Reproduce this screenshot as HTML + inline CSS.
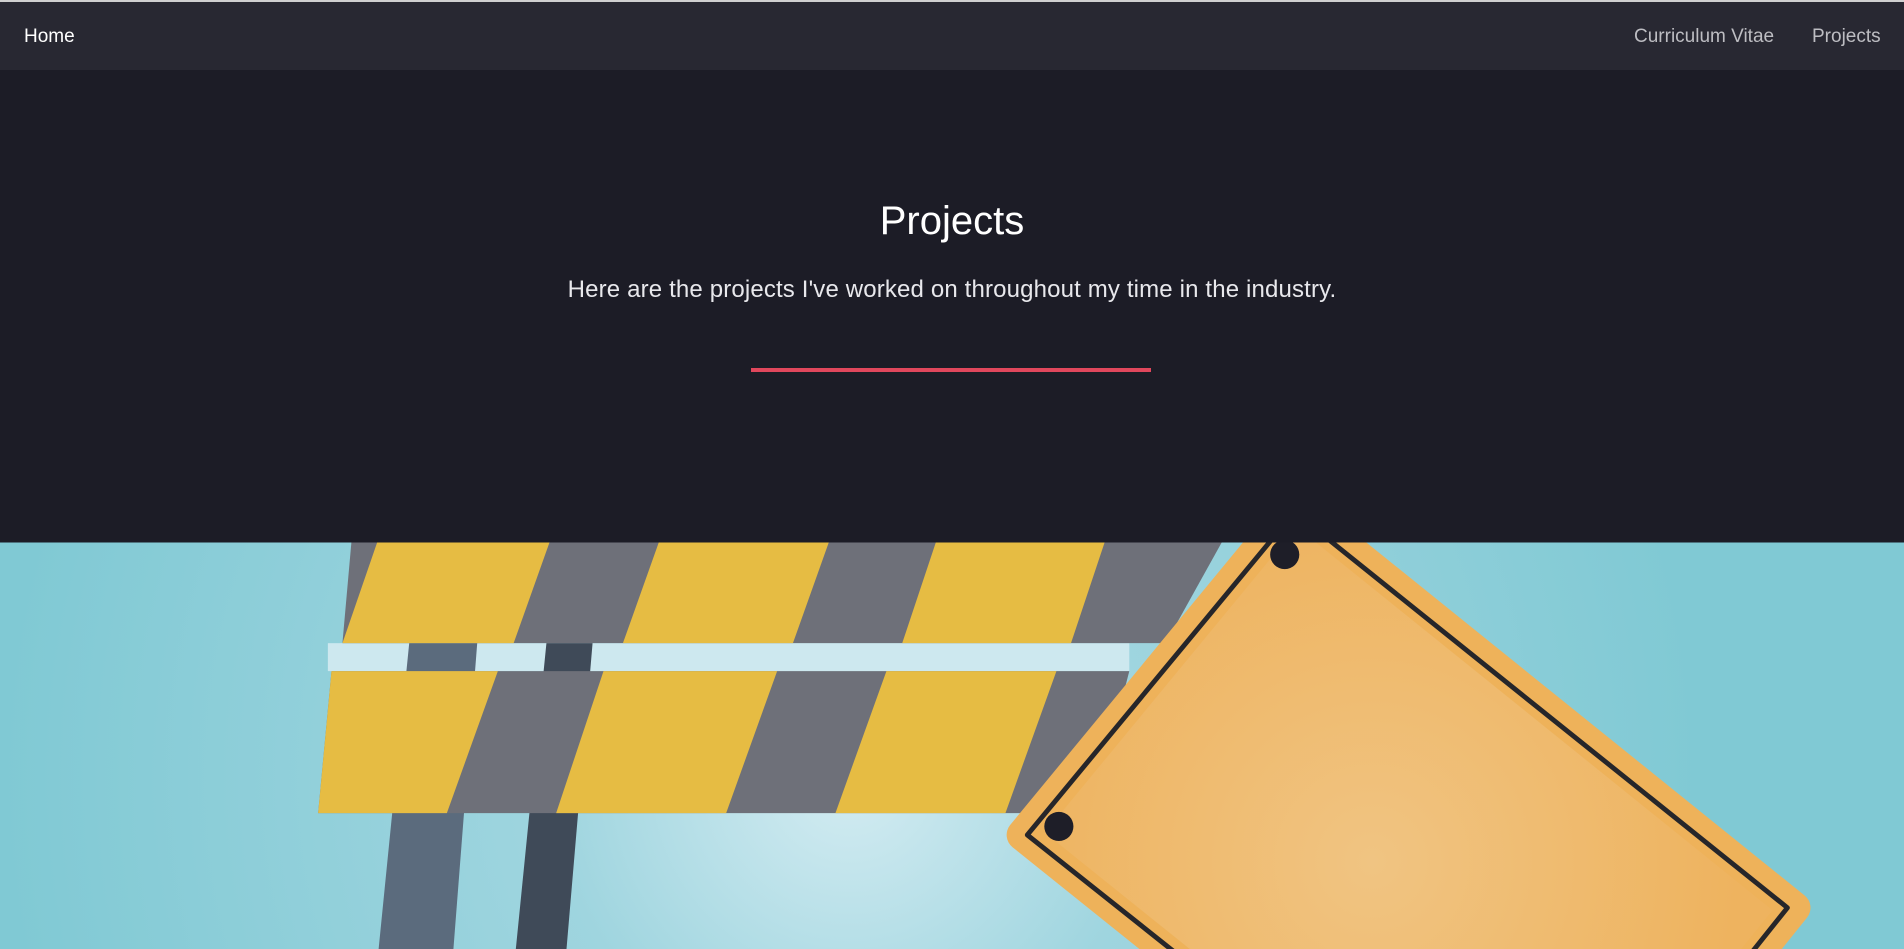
<!DOCTYPE html>
<html><head><meta charset="utf-8"><style>
html,body{margin:0;padding:0;width:1904px;height:949px;overflow:hidden;background:#1c1c26;font-family:"Liberation Sans",sans-serif}
.nav{position:absolute;left:0;top:0;width:1904px;height:70px;background:#282832;border-top:2px solid #d0d0d0;box-sizing:border-box}
.nav span{position:absolute;top:24px;font-size:19px;color:#bdbdc2}
.title{position:absolute;left:0;width:1904px;top:199px;text-align:center;color:#fff;font-size:40px}
.sub{position:absolute;left:0;width:1904px;top:276px;text-align:center;color:#e8e8ec;font-size:24px;letter-spacing:0.15px}
.line{position:absolute;left:751px;top:368px;width:400px;height:4px;background:#e0475c}
svg{position:absolute;left:0;top:0}
</style></head><body>
<div class="nav"><span style="left:24px;color:#fff">Home</span><span style="left:1634px">Curriculum Vitae</span><span style="left:1812px">Projects</span></div>
<div class="title">Projects</div>
<div class="sub">Here are the projects I've worked on throughout my time in the industry.</div>
<div class="line"></div>
<svg width="1904" height="949" viewBox="0 0 1568 782" preserveAspectRatio="none">
<defs>
<radialGradient id="bg" cx="700" cy="640" r="700" gradientUnits="userSpaceOnUse"><stop offset="0" stop-color="#d4ecf2"/><stop offset="0.35" stop-color="#9fd5df"/><stop offset="1" stop-color="#80c9d4"/></radialGradient>
<radialGradient id="sg" cx="1130" cy="710" r="300" gradientUnits="userSpaceOnUse"><stop offset="0" stop-color="#f0c482"/><stop offset="1" stop-color="#eeb35f"/></radialGradient>
<clipPath id="c"><rect x="0" y="447" width="1568" height="335"/></clipPath>
</defs>
<g clip-path="url(#c)">
<rect x="0" y="447" width="1568" height="335" fill="url(#bg)"/>
<rect x="270" y="530" width="660" height="23" fill="#cde8ef"/>
<polygon points="337,530 393,530 372,800 310,800" fill="#5b6b7d"/>
<polygon points="450,530 488,530 465,800 423,800" fill="#3f4a58"/>
<polygon points="290,440 1010,440 960,530 282,530" fill="#6e7079"/>
<polygon points="313,440 455,440 423,530 282,530" fill="#e6bc43"/>
<polygon points="545,440 685,440 653,530 513,530" fill="#e6bc43"/>
<polygon points="773,440 912,440 882,530 743,530" fill="#e6bc43"/>
<polygon points="273,553 930,553 900,670 262,670" fill="#6e7079"/>
<polygon points="273,553 410,553 368,670 262,670" fill="#e6bc43"/>
<polygon points="497,553 640,553 598,670 458,670" fill="#e6bc43"/>
<polygon points="730,553 870,553 828,670 688,670" fill="#e6bc43"/>
<polygon points="842,688 1066,416 1478,748 1258,1022" fill="url(#sg)" stroke="#eeb25a" stroke-width="26" stroke-linejoin="round"/>
<polygon points="846,688 1066,422 1472,748 1258,1016" fill="none" stroke="#26262a" stroke-width="4" stroke-linejoin="round"/>
<circle cx="1058" cy="457" r="12" fill="#1e1e28"/>
<circle cx="872" cy="681" r="12" fill="#1e1e28"/>
</g>
</svg>
</body></html>
